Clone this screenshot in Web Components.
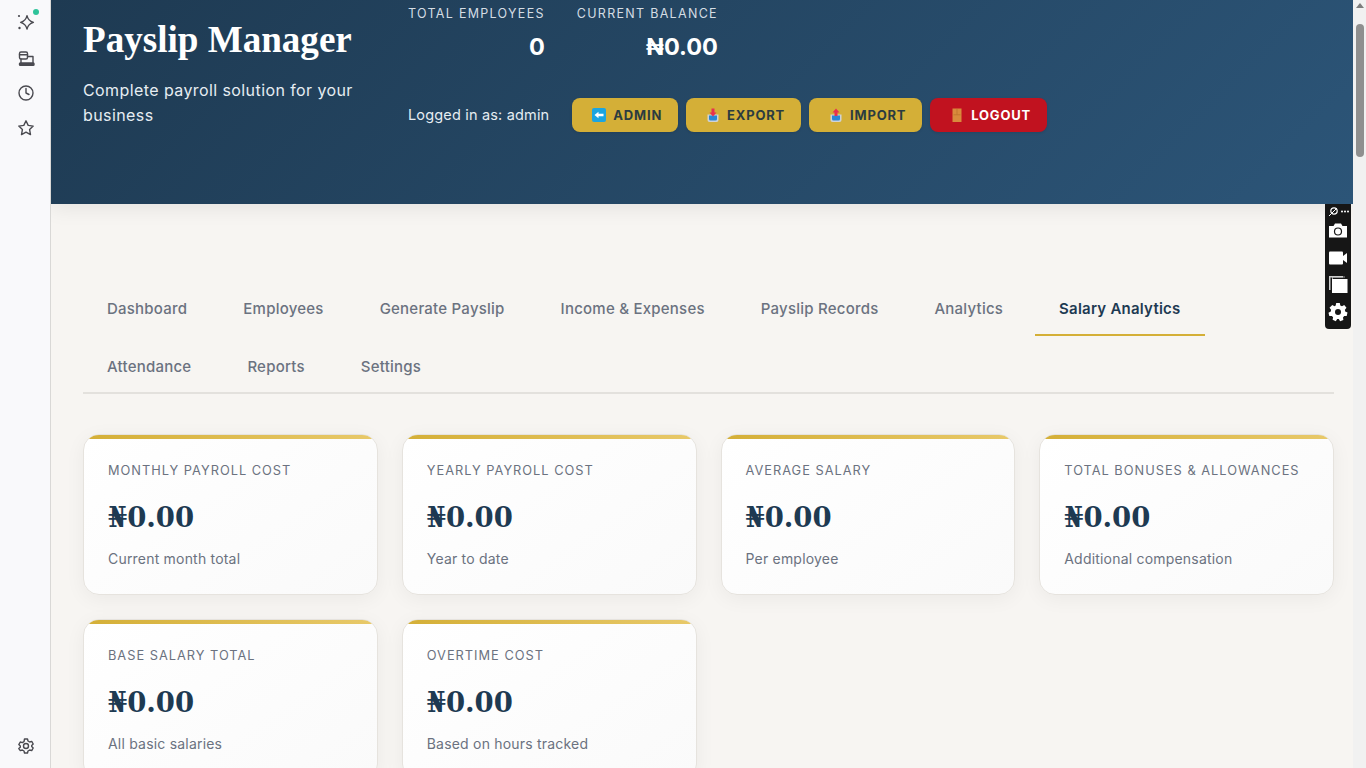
<!DOCTYPE html>
<html lang="en">
<head>
<meta charset="utf-8">
<title>Payslip Manager</title>
<style>
  html, body { margin: 0; height: 100%; overflow: hidden; }
  body { font-family: Inter, "Liberation Sans", sans-serif; background: #f7f5f2; }
</style>
</head>
<body>
<app-shell>
  <side-rail slot="rail"></side-rail>
  <page-header slot="main">
    <stat-item slot="stats" label="TOTAL EMPLOYEES" value="0"></stat-item>
    <stat-item slot="stats" label="CURRENT BALANCE" value="₦0.00"></stat-item>
    <head-button slot="actions" icon="back" text="ADMIN"></head-button>
    <head-button slot="actions" icon="out" text="EXPORT"></head-button>
    <head-button slot="actions" icon="in" text="IMPORT"></head-button>
    <head-button slot="actions" icon="door" text="LOGOUT" danger></head-button>
  </page-header>
  <page-content slot="main">
    <tab-bar>
      <tab-item>Dashboard</tab-item>
      <tab-item>Employees</tab-item>
      <tab-item>Generate Payslip</tab-item>
      <tab-item>Income &amp; Expenses</tab-item>
      <tab-item>Payslip Records</tab-item>
      <tab-item>Analytics</tab-item>
      <tab-item active>Salary Analytics</tab-item>
      <tab-item>Attendance</tab-item>
      <tab-item>Reports</tab-item>
      <tab-item>Settings</tab-item>
    </tab-bar>
    <card-grid>
      <stat-card label="MONTHLY PAYROLL COST" value="₦0.00" note="Current month total"></stat-card>
      <stat-card label="YEARLY PAYROLL COST" value="₦0.00" note="Year to date"></stat-card>
      <stat-card label="AVERAGE SALARY" value="₦0.00" note="Per employee"></stat-card>
      <stat-card label="TOTAL BONUSES &amp; ALLOWANCES" value="₦0.00" note="Additional compensation"></stat-card>
      <stat-card label="BASE SALARY TOTAL" value="₦0.00" note="All basic salaries"></stat-card>
      <stat-card label="OVERTIME COST" value="₦0.00" note="Based on hours tracked"></stat-card>
    </card-grid>
  </page-content>
  <fake-scrollbar slot="scroll"></fake-scrollbar>
  <capture-bar slot="overlay"></capture-bar>
</app-shell>

<script>
// small helper, every element just sets its shadow html once
class Base extends HTMLElement {
  constructor() {
    super();
    this.attachShadow({ mode: 'open' });
  }
  connectedCallback() {
    this.shadowRoot.innerHTML = this.render();
  }
}

class AppShell extends Base {
  render() {
    return `
      <style>
        :host { display: flex; height: 768px; width: 1366px; position: relative; overflow: hidden; }
        .main { flex: 1; min-width: 0; display: flex; flex-direction: column; overflow: hidden; background: #f7f5f2; }
      </style>
      <slot name="rail"></slot>
      <div class="main"><slot name="main"></slot></div>
      <slot name="scroll"></slot>
      <slot name="overlay"></slot>
    `;
  }
}

class SideRail extends Base {
  render() {
    const s = 'fill="none" stroke="#4a4a50" stroke-width="1.4" stroke-linejoin="round" stroke-linecap="round"';
    return `
      <style>
        :host { display: flex; flex-direction: column; align-items: center; width: 51px; flex: none; background: #f9f9fb; border-right: 1px solid #d9d8d6; box-sizing: border-box; padding: 13px 0 0 2px; }
        .ico { width: 20px; height: 20px; margin-bottom: 15px; position: relative; display: block; }
        .dot { position: absolute; top: -4px; right: -3px; width: 6px; height: 6px; border-radius: 50%; background: #2fc39a; }
        svg { display: block; overflow: visible; }
        .push { margin-top: auto; margin-bottom: 12px; }
      </style>
      <div class="ico">
        <svg width="20" height="20" viewBox="0 0 20 20" ${s}>
          <path d="M11 2.600c.7 3.400 2.400 5.500 6.400 6.700-4 1.200-5.700 3.300-6.400 6.700-.7-3.400-2.400-5.500-6.400-6.700 4-1.200 5.700-3.300 6.400-6.700z"/>
          <circle cx="3" cy="3" r="1.100" fill="#4a4a50" stroke="none"/>
          <circle cx="3.500" cy="15" r="1.200" fill="#4a4a50" stroke="none"/>
        </svg>
        <span class="dot"></span>
      </div>
      <div class="ico">
        <svg width="20" height="20" viewBox="0 0 20 20" ${s}>
          <rect x="3.500" y="4" width="8" height="7" rx="1.500"/>
          <path d="M3.500 6.800h8M5 11v4M11.500 8.500H17V15"/>
          <rect x="3.500" y="15" width="14.500" height="2.200" rx=".8" fill="#4a4a50"/>
        </svg>
      </div>
      <div class="ico">
        <svg width="20" height="20" viewBox="0 0 20 20" ${s}>
          <circle cx="10" cy="10" r="7"/><path d="M10 5.500V10l3 1.500"/>
        </svg>
      </div>
      <div class="ico">
        <svg width="20" height="20" viewBox="0 0 20 20" ${s}>
          <path d="M10 2.800l2.200 4.600 5 .7-3.600 3.500.9 5L10 14.200l-4.500 2.400.9-5-3.600-3.500 5-.7z"/>
        </svg>
      </div>
      <div class="ico push">
        <svg width="20" height="20" viewBox="0 0 20 20" ${s}>
          <circle cx="10" cy="10" r="2.500"/>
          <path d="M8.500 3h3l.5 2 1.700 1 2-.6 1.500 2.600-1.500 1.400v1.200l1.500 1.400-1.500 2.600-2-.6-1.700 1-.5 2h-3l-.5-2-1.700-1-2 .6L2.800 12.600l1.500-1.400V10L2.800 8.600 4.300 6l2 .6L8 5.600z"/>
        </svg>
      </div>
    `;
  }
}

class PageHeader extends Base {
  render() {
    return `
      <style>
        :host { display: flex; flex: none; height: 204px; box-sizing: border-box; padding: 7px 32px 0; gap: 32px; color: #fff;
          background: linear-gradient(135deg, #1e3a52 0%, #2c5578 100%); box-shadow: 0 4px 20px rgba(0,0,0,.08); position: relative; z-index: 1; }
        .brand { width: 293px; flex: none; }
        h1 { margin: 11px 0 0; font: 700 37.100px/44px "Liberation Serif", serif; }
        p { margin: 16px 0 0; font: 400 16px/25px Inter, sans-serif; letter-spacing: .41px; color: #e6edf2; }
        .right { display: flex; flex-direction: column; }
        .stats { display: flex; gap: 32px; }
        .row { display: flex; align-items: center; margin-top: 36px; }
        .who { font: 400 14.500px/20px Inter, sans-serif; letter-spacing: .17px; color: #e6edf2; margin-right: 23px; }
        .actions { display: flex; gap: 8px; }
      </style>
      <div class="brand">
        <h1>Payslip Manager</h1>
        <p>Complete payroll solution for your business</p>
      </div>
      <div class="right">
        <div class="stats"><slot name="stats"></slot></div>
        <div class="row">
          <span class="who">Logged in as: admin</span>
          <div class="actions"><slot name="actions"></slot></div>
        </div>
      </div>
    `;
  }
}

class StatItem extends Base {
  render() {
    return `
      <style>
        :host { display: block; text-align: right; }
        .l { font: 400 12.500px/14px Inter, sans-serif; letter-spacing: 1.3px; color: #d5dde4; white-space: nowrap; }
        .v { font: 700 23.500px/30px Inter, sans-serif; margin-top: 11px; color: #fff; }
      </style>
      <div class="l">${this.getAttribute('label')}</div>
      <div class="v">${this.getAttribute('value')}</div>
    `;
  }
}

const HEAD_ICONS = {
  back: `<rect x="1" y="1" width="14" height="14" rx="2" fill="#1ca5e0"/>
         <path d="M3.500 8L7.500 4.800V6.800H12.500V9.200H7.500V11.200z" fill="#fff"/>`,
  out: `<path d="M2.500 7.500h11v5.500a2 2 0 0 1-2 2h-7a2 2 0 0 1-2-2z" fill="#cfd3d6"/>
        <path d="M4 8.500h8v3.500a1.500 1.500 0 0 1-1.500 1.500h-5A1.500 1.500 0 0 1 4 12z" fill="#2a86d6"/>
        <path d="M6.500 1.500h3v4h2L8 9.500 4.500 5.500h2z" fill="#e8304f"/>`,
  in: `<path d="M2.500 7.500h11v5.500a2 2 0 0 1-2 2h-7a2 2 0 0 1-2-2z" fill="#cfd3d6"/>
       <path d="M4 8.500h8v3.500a1.500 1.500 0 0 1-1.500 1.500h-5A1.500 1.500 0 0 1 4 12z" fill="#2a86d6"/>
       <path d="M8 1.500l3.500 4h-2v3.500h-3V5.500h-2z" fill="#e8304f"/>`,
  door: `<rect x="3.500" y="1.500" width="9" height="13.500" fill="#d98a3c"/>
         <path d="M4.500 7.800h7M8 2v5.500" stroke="#b96f2a" stroke-width=".7"/>`
};

class HeadButton extends Base {
  render() {
    const danger = this.hasAttribute('danger');
    return `
      <style>
        :host { display: block; }
        .b { display: flex; align-items: center; gap: 6px; height: 34px; box-sizing: border-box; padding: 0 16px 0 19px; border-radius: 8px;
          background: ${danger ? '#c1121f' : '#d4af37'}; color: ${danger ? '#fff' : '#2b3b40'};
          font: 700 13px/1 Inter, sans-serif; letter-spacing: .8px; box-shadow: 0 1px 3px rgba(0,0,0,.1); }
        svg { display: block; flex: none; }
      </style>
      <div class="b">
        <svg width="16" height="16" viewBox="0 0 16 16">${HEAD_ICONS[this.getAttribute('icon')]}</svg>
        <span>${this.getAttribute('text')}</span>
      </div>
    `;
  }
}

class PageContent extends Base {
  render() {
    return `
      <style>
        :host { display: block; padding: 76px 19px 0 32px; }
      </style>
      <slot></slot>
    `;
  }
}

class TabBar extends Base {
  render() {
    return `
      <style>
        :host { display: flex; flex-wrap: wrap; gap: 4px 8px; border-bottom: 2px solid #e3e1dd; margin-bottom: 40px; }
      </style>
      <slot></slot>
    `;
  }
}

class TabItem extends Base {
  render() {
    const on = this.hasAttribute('active');
    return `
      <style>
        :host { display: block; padding: 20px 24px 16px; margin-bottom: -2px; font: ${on ? 600 : 500} 15px/18px Inter, sans-serif; letter-spacing: .23px;
          color: ${on ? '#1e3a52' : '#6b7280'}; border-bottom: 2px solid ${on ? '#d4af37' : 'transparent'}; }
      </style>
      <slot></slot>
    `;
  }
}

class CardGrid extends Base {
  render() {
    return `
      <style>
        :host { display: grid; grid-template-columns: repeat(4, 1fr); gap: 24px; }
      </style>
      <slot></slot>
    `;
  }
}

class StatCard extends Base {
  render() {
    return `
      <style>
        :host { display: block; height: 161px; box-sizing: border-box; position: relative; overflow: hidden; border-radius: 16px;
          border: 1px solid #e6e3de; background: linear-gradient(145deg, #fff 0%, #fafafa 100%); padding: 26px 24px 0;
          box-shadow: 0 4px 20px rgba(0,0,0,.05); }
        .bar { position: absolute; left: 0; right: 0; top: 0; height: 4px; background: linear-gradient(90deg, #d4af37, #e8c96a); }
        .l { font: 400 12.800px/20px Inter, sans-serif; letter-spacing: 1px; color: #6b7280; white-space: nowrap; }
        .v { font: 700 27.500px/36px "DejaVu Serif", serif; color: #1e3a52; margin-top: 18px; }
        .n { font: 400 14px/20px Inter, sans-serif; letter-spacing: .2px; color: #6b7280; margin-top: 14px; }
      </style>
      <div class="bar"></div>
      <div class="l">${this.getAttribute('label')}</div>
      <div class="v">${this.getAttribute('value')}</div>
      <div class="n">${this.getAttribute('note')}</div>
    `;
  }
}

class FakeScrollbar extends Base {
  render() {
    return `
      <style>
        :host { display: flex; flex-direction: column; align-items: center; flex: none; width: 13px; background: #f1f1f1; }
        .up { width: 0; height: 0; margin-top: 3px; border: 4px solid transparent; border-top: 0; border-bottom: 5px solid #7d7d7d; }
        .thumb { width: 8px; height: 133px; margin-top: 16px; border-radius: 4px; background: #8f8f8f; }
      </style>
      <div class="up"></div>
      <div class="thumb"></div>
    `;
  }
}

class CaptureBar extends Base {
  render() {
    return `
      <style>
        :host { position: absolute; left: 1325px; top: 204px; width: 26px; height: 125px; background: #161616; border-radius: 0 0 4px 4px;
          display: flex; flex-direction: column; align-items: center; z-index: 3; }
        svg { display: block; }
        .top { margin-top: 2px; margin-bottom: 4px; }
        .i { margin-bottom: 7px; }
      </style>
      <svg class="top" width="22" height="11" viewBox="0 0 22 11" fill="#fff">
        <circle cx="7" cy="5" r="3.200" fill="none" stroke="#fff" stroke-width="1.200"/>
        <path d="M2 10l8-8" stroke="#fff" stroke-width="1"/>
        <circle cx="15" cy="5.500" r="1"/><circle cx="18" cy="5.500" r="1"/><circle cx="21" cy="5.500" r="1"/>
      </svg>
      <svg class="i" width="20" height="20" viewBox="0 0 20 20">
        <path d="M1 5h4.500L7 2.500h6L14.500 5H19v11.500H1z" fill="#fff"/>
        <circle cx="10" cy="10.500" r="3.500" fill="none" stroke="#161616" stroke-width="1.200"/>
      </svg>
      <svg class="i" width="20" height="20" viewBox="0 0 20 20">
        <rect x="1" y="3.500" width="14" height="13" rx="1" fill="#fff"/>
        <path d="M15 8l4-3v10l-4-3z" fill="#fff"/>
      </svg>
      <svg class="i" width="20" height="20" viewBox="0 0 20 20">
        <path d="M4 1.500h13v1H5v12H4z" fill="#9a9a9a"/>
        <rect x="4" y="4" width="15.500" height="14" fill="#fff"/>
        <path d="M1 1h14v1.500H2.500V15H1z" fill="#cfcfcf"/>
      </svg>
      <svg width="20" height="20" viewBox="0 0 20 20">
        <path fill="#fff" fill-rule="evenodd" d="M8.200 1h3.600l.5 2.500 1.700.8 2.200-1.300 2.300 2.800-1.600 2 .3 1.800 2.300 1-.8 3.500-2.500-.1-1.200 1.400.4 2.500-3.300 1.300-1.300-2.100H9.200l-1.400 2.100-3.200-1.400.5-2.500-1.200-1.400-2.600.2-.8-3.400 2.300-1.100.3-1.800-1.600-2L4.300 3l2.200 1.300 1.200-.8zM10 7a3 3 0 1 0 0 6 3 3 0 0 0 0-6z"/>
      </svg>
    `;
  }
}

customElements.define('app-shell', AppShell);
customElements.define('side-rail', SideRail);
customElements.define('page-header', PageHeader);
customElements.define('stat-item', StatItem);
customElements.define('head-button', HeadButton);
customElements.define('page-content', PageContent);
customElements.define('tab-bar', TabBar);
customElements.define('tab-item', TabItem);
customElements.define('card-grid', CardGrid);
customElements.define('stat-card', StatCard);
customElements.define('fake-scrollbar', FakeScrollbar);
customElements.define('capture-bar', CaptureBar);
</script>
</body>
</html>
